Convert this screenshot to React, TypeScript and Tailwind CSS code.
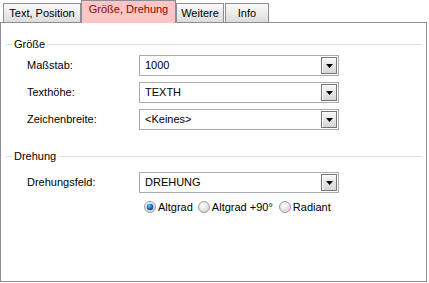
function Tab({ label, width, selected }: { label: string; width: number; selected?: boolean }) {
  if (selected) {
    return (
      <div
        className="relative z-10 -mb-px flex h-[23px] shrink-0 items-start justify-center border border-b-0 border-[#8d8d98] bg-[#ffc4c4] pt-[3px] text-[#7a0a0a]"
        style={{ width }}
      >
        {label}
      </div>
    );
  }
  return (
    <div
      className="flex h-[19px] shrink-0 items-center justify-center border border-b-0 border-[#8d8d98] bg-gradient-to-b from-[#fbfbfb] to-[#dcdcdc] pt-px"
      style={{ width }}
    >
      {label}
    </div>
  );
}

function GroupHeader({ title }: { title: string }) {
  return (
    <div className="flex h-4 items-center pl-[5px] pr-[4px]">
      <div className="h-px w-[6px] bg-[#d5dfe5]" />
      <span className="px-[2px]">{title}</span>
      <div className="h-px flex-1 bg-[#d5dfe5]" />
    </div>
  );
}

function Combo({ value }: { value: string }) {
  return (
    <div className="flex h-[21px] w-[200px] items-center border border-[#a5acb2] bg-white pl-[5px] pr-px">
      <span className="flex-1 truncate">{value}</span>
      <div className="flex h-[17px] w-[16px] items-center justify-center border border-[#767676] bg-gradient-to-b from-[#f8f8f8] to-[#d6d6d6] shadow-[inset_1px_1px_0_#ffffff]">
        <svg width="7" height="4" viewBox="0 0 7 4">
          <path d="M0 0h7L3.5 4z" fill="#000" />
        </svg>
      </div>
    </div>
  );
}

function Row({ label, value }: { label: string; value: string }) {
  return (
    <div className="flex items-center pl-[26px]">
      <span className="w-[112px]">{label}</span>
      <Combo value={value} />
    </div>
  );
}

function Radio({ checked }: { checked?: boolean }) {
  return (
    <svg width="12" height="12" viewBox="0 0 12 12" className="shrink-0">
      <defs>
        <radialGradient id={checked ? "rg-on" : "rg-off"} cx="0.4" cy="0.35" r="0.7">
          <stop offset="0" stopColor="#ffffff" />
          <stop offset="1" stopColor="#d4d4d4" />
        </radialGradient>
        <radialGradient id="rg-dot" cx="0.4" cy="0.35" r="0.7">
          <stop offset="0" stopColor="#7fc4f4" />
          <stop offset="0.5" stopColor="#1e74c4" />
          <stop offset="1" stopColor="#0a3e7a" />
        </radialGradient>
      </defs>
      <circle cx="6" cy="6" r="5.5" fill={`url(#${checked ? "rg-on" : "rg-off"})`} stroke="#9c9c9c" />
      {checked && <circle cx="6" cy="6" r="3.3" fill="url(#rg-dot)" />}
    </svg>
  );
}

export default function App() {
  return (
    <div
      className="h-[283px] w-[429px] bg-white text-[11px] leading-none text-black"
      style={{ fontFamily: '"Liberation Sans", Arial, sans-serif' }}
    >
      <div className="flex h-[22px] items-end pl-[3px]">
        <Tab label="Text, Position" width={78} />
        <Tab label="Größe, Drehung" width={95} selected />
        <Tab label="Weitere" width={48} />
        <div className="w-px" />
        <Tab label="Info" width={44} />
      </div>

      <div className="h-[260px] w-[427px] border border-[#8d8d98] bg-white pt-[13px]">
        <GroupHeader title="Größe" />
        <div className="mt-[3px] flex flex-col gap-[6px]">
          <Row label="Maßstab:" value="1000" />
          <Row label="Texthöhe:" value="TEXTH" />
          <Row label="Zeichenbreite:" value="<Keines>" />
        </div>

        <div className="mt-[18px]">
          <GroupHeader title="Drehung" />
        </div>
        <div className="mt-[8px]">
          <Row label="Drehungsfeld:" value="DREHUNG" />
        </div>
        <div className="mt-[6px] flex h-4 items-center pl-[143px]">
          <Radio checked />
          <span className="ml-[2px] mr-[5px]">Altgrad</span>
          <Radio />
          <span className="ml-[2px] mr-[6px]">Altgrad +90°</span>
          <Radio />
          <span className="ml-[2px]">Radiant</span>
        </div>
      </div>
    </div>
  );
}
